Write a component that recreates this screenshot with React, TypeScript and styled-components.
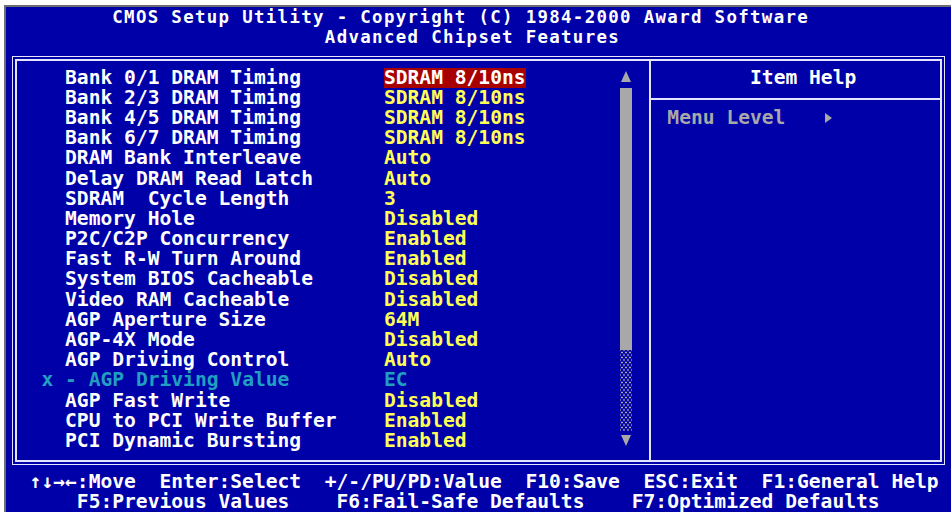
import React from 'react'
import styled, { createGlobalStyle } from 'styled-components'

// one text cell of the 80x25 screen
const CW = 11.81
const RH = 20.2
const cols = (n: number) => `${+(n * CW).toFixed(2)}px`

const C = {
  blue: '#0000a8',
  frame: '#6f6f6f',
  line: '#e4e4ff',
  white: '#ffffff',
  yellow: '#ffff55',
  gray: '#a8a8a8',
  teal: '#20a0c0',
  red: '#a80000',
}

const GlobalStyle = createGlobalStyle`
  html, body {
    margin: 0;
    background: #ffffff;
  }
`

const Screen = styled.div`
  margin: 5px 0 0 4px;
  width: 945px;
  height: ${25 * RH}px;
  border-top: 2px solid ${C.frame};
  border-left: 2px solid ${C.frame};
  background: ${C.blue};
  display: flex;
  flex-direction: column;
  font-family: 'DejaVu Sans Mono', 'Liberation Mono', monospace;
  font-weight: bold;
  font-size: 19.62px;
  line-height: ${RH}px;
  white-space: pre;
  color: ${C.white};
  overflow: hidden;
`

const TitleLine = styled.div<{ $col: number }>`
  height: ${RH}px;
  padding-left: ${p => cols(p.$col)};
  font-size: 17.4px;
  letter-spacing: ${+(CW - 17.4 * 0.602).toFixed(2)}px;
`

const BoxFrame = styled.div`
  margin: 8.6px 6px 0 6px;
  border: 1px solid ${C.line};
  padding: 2px;
`

const BoxInner = styled.div`
  border: 2px solid ${C.line};
  height: 399px;
  display: flex;
`

const ItemsPanel = styled.div`
  width: 632px;
  padding: 6.6px 0 0 48.05px;
  box-sizing: border-box;
  display: flex;
`

const ItemList = styled.div`
  width: ${cols(47)};
  display: flex;
  flex-direction: column;
`

const ItemRow = styled.div`
  height: ${RH}px;
  display: flex;
`

const ItemLabel = styled.span<{ $disabled?: boolean }>`
  width: ${p => cols(p.$disabled ? 29 : 27)};
  margin-left: ${p => (p.$disabled ? `-${cols(2)}` : '0')};
  color: ${p => (p.$disabled ? C.teal : C.white)};
`

const ItemValue = styled.span<{ $disabled?: boolean; $selected?: boolean }>`
  height: ${RH}px;
  color: ${p => (p.$selected ? C.white : p.$disabled ? C.teal : C.yellow)};
  background: ${p => (p.$selected ? C.red : 'transparent')};
`

const ScrollBar = styled.div`
  width: ${cols(1)};
  display: flex;
  flex-direction: column;
`

const ScrollArrow = styled.div<{ $down?: boolean }>`
  height: ${RH}px;
  box-sizing: border-box;
  padding: ${p => (p.$down ? '4px 0 0 1px' : '3px 0 0 1px')};

  &::before {
    content: '';
    display: block;
    width: 0;
    height: 0;
    border-left: 5px solid transparent;
    border-right: 5px solid transparent;
    ${p => (p.$down ? `border-top: 11px solid ${C.gray};` : `border-bottom: 11px solid ${C.gray};`)}
  }
`

const ScrollThumb = styled.div`
  height: ${13 * RH}px;
  background: ${C.gray};
`

const ScrollTrack = styled.div`
  height: ${4 * RH}px;
  background-image: radial-gradient(circle, ${C.gray} 0.8px, transparent 1.2px),
    radial-gradient(circle, ${C.gray} 0.8px, transparent 1.2px);
  background-size: 4px 5px;
  background-position: 0 0, 2px 2.5px;
`

const HelpPanel = styled.div`
  flex: 1;
  border-left: 2px solid ${C.line};
  display: flex;
  flex-direction: column;
`

const HelpTitle = styled.div`
  padding: 6.6px 0 10.1px 99.03px;
  line-height: ${RH}px;
  border-bottom: 2px solid ${C.line};
`

const HelpLine = styled.div`
  margin-top: 8.1px;
  padding-left: 16.36px;
  height: ${RH}px;
  display: flex;
  align-items: center;
  color: ${C.gray};
`

const LevelMark = styled.span`
  margin-left: ${cols(3)};
  width: ${cols(1)};
  display: flex;
  justify-content: flex-end;
  padding-right: 1px;
  box-sizing: border-box;

  &::before {
    content: '';
    width: 0;
    height: 0;
    border-top: 5px solid transparent;
    border-bottom: 5px solid transparent;
    border-left: 7px solid ${C.gray};
  }
`

const Footer = styled.div`
  margin-top: 6.6px;
  display: flex;
  flex-direction: column;
`

const FooterLine = styled.div`
  height: ${RH}px;
`

type Item = { label: string; value: string; disabled?: boolean }

const items: Item[] = [
  { label: 'Bank 0/1 DRAM Timing', value: 'SDRAM 8/10ns' },
  { label: 'Bank 2/3 DRAM Timing', value: 'SDRAM 8/10ns' },
  { label: 'Bank 4/5 DRAM Timing', value: 'SDRAM 8/10ns' },
  { label: 'Bank 6/7 DRAM Timing', value: 'SDRAM 8/10ns' },
  { label: 'DRAM Bank Interleave', value: 'Auto' },
  { label: 'Delay DRAM Read Latch', value: 'Auto' },
  { label: 'SDRAM  Cycle Length', value: '3' },
  { label: 'Memory Hole', value: 'Disabled' },
  { label: 'P2C/C2P Concurrency', value: 'Enabled' },
  { label: 'Fast R-W Turn Around', value: 'Enabled' },
  { label: 'System BIOS Cacheable', value: 'Disabled' },
  { label: 'Video RAM Cacheable', value: 'Disabled' },
  { label: 'AGP Aperture Size', value: '64M' },
  { label: 'AGP-4X Mode', value: 'Disabled' },
  { label: 'AGP Driving Control', value: 'Auto' },
  { label: 'x - AGP Driving Value', value: 'EC', disabled: true },
  { label: 'AGP Fast Write', value: 'Disabled' },
  { label: 'CPU to PCI Write Buffer', value: 'Enabled' },
  { label: 'PCI Dynamic Bursting', value: 'Enabled' },
]

export default function App() {
  return (
    <>
      <GlobalStyle />
      <Screen>
        <TitleLine $col={9}>CMOS Setup Utility - Copyright (C) 1984-2000 Award Software</TitleLine>
        <TitleLine $col={27}>Advanced Chipset Features</TitleLine>

        <BoxFrame>
          <BoxInner>
            <ItemsPanel>
              <ItemList>
                {items.map((it, i) => (
                  <ItemRow key={it.label}>
                    <ItemLabel $disabled={it.disabled}>{it.label}</ItemLabel>
                    <ItemValue $disabled={it.disabled} $selected={i === 0}>
                      {it.value}
                    </ItemValue>
                  </ItemRow>
                ))}
              </ItemList>
              <ScrollBar>
                <ScrollArrow />
                <ScrollThumb />
                <ScrollTrack />
                <ScrollArrow $down />
              </ScrollBar>
            </ItemsPanel>
            <HelpPanel>
              <HelpTitle>Item Help</HelpTitle>
              <HelpLine>
                Menu Level
                <LevelMark />
              </HelpLine>
            </HelpPanel>
          </BoxInner>
        </BoxFrame>

        <Footer>
          <FooterLine>{'  ↑↓→←:Move  Enter:Select  +/-/PU/PD:Value  F10:Save  ESC:Exit  F1:General Help'}</FooterLine>
          <FooterLine>{'      F5:Previous Values    F6:Fail-Safe Defaults    F7:Optimized Defaults'}</FooterLine>
        </Footer>
      </Screen>
    </>
  )
}
